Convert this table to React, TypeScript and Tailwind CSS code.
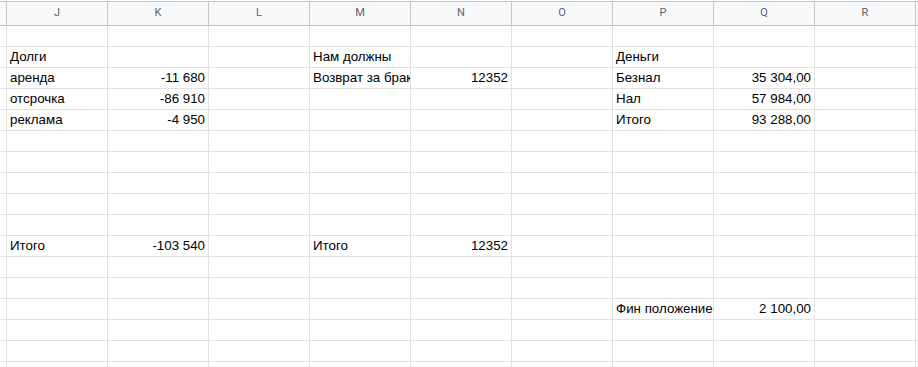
import React from "react";

type Cell = { t: string; r?: boolean } | null;

const cols = ["J", "K", "L", "M", "N", "O", "P", "Q", "R"];

const E: Cell[] = [null, null, null, null, null, null, null, null, null];

const rows: Cell[][] = [
  E,
  [{ t: "Долги" }, null, null, { t: "Нам должны" }, null, null, { t: "Деньги" }, null, null],
  [{ t: "аренда" }, { t: "-11 680", r: true }, null, { t: "Возврат за брак" }, { t: "12352", r: true }, null, { t: "Безнал" }, { t: "35 304,00", r: true }, null],
  [{ t: "отсрочка" }, { t: "-86 910", r: true }, null, null, null, null, { t: "Нал" }, { t: "57 984,00", r: true }, null],
  [{ t: "реклама" }, { t: "-4 950", r: true }, null, null, null, null, { t: "Итого" }, { t: "93 288,00", r: true }, null],
  E,
  E,
  E,
  E,
  E,
  [{ t: "Итого" }, { t: "-103 540", r: true }, null, { t: "Итого" }, { t: "12352", r: true }, null, null, null, null],
  E,
  E,
  [null, null, null, null, null, null, { t: "Фин положение" }, { t: "2 100,00", r: true }, null],
  E,
  E,
  E,
];

export default function App() {
  return (
    <div
      className="w-[918px] h-[367px] overflow-hidden bg-white"
      style={{ fontFamily: '"Liberation Sans", Arial, sans-serif' }}
    >
      <div className="h-[1px] bg-white" />
      <div className="flex h-[25px] border-t border-b border-[#c4c7c5] bg-[#f8f9fa]">
        <div className="w-[7px] shrink-0 border-r border-[#c4c7c5]" />
        {cols.map((c) => (
          <div
            key={c}
            className="w-[101px] shrink-0 border-r border-[#c4c7c5] flex items-center justify-center text-[11px] text-[#5f6368]"
            style={{ fontFamily: 'Roboto, "Liberation Sans", sans-serif' }}
          >
            {c}
          </div>
        ))}
      </div>
      {rows.map((row, i) => (
        <div key={i} className="flex h-[21px] border-b border-[#e2e2e3]">
          <div className="w-[7px] shrink-0 border-r border-[#e2e2e3]" />
          {row.map((cell, j) => (
            <div
              key={j}
              className={
                "w-[101px] shrink-0 border-r border-[#e2e2e3] overflow-hidden whitespace-nowrap flex items-end pb-[2px] px-[3px] text-[13.33px] leading-[16px] text-black " +
                (cell && cell.r ? "justify-end" : "justify-start")
              }
            >
              {cell ? cell.t : ""}
            </div>
          ))}
        </div>
      ))}
    </div>
  );
}
